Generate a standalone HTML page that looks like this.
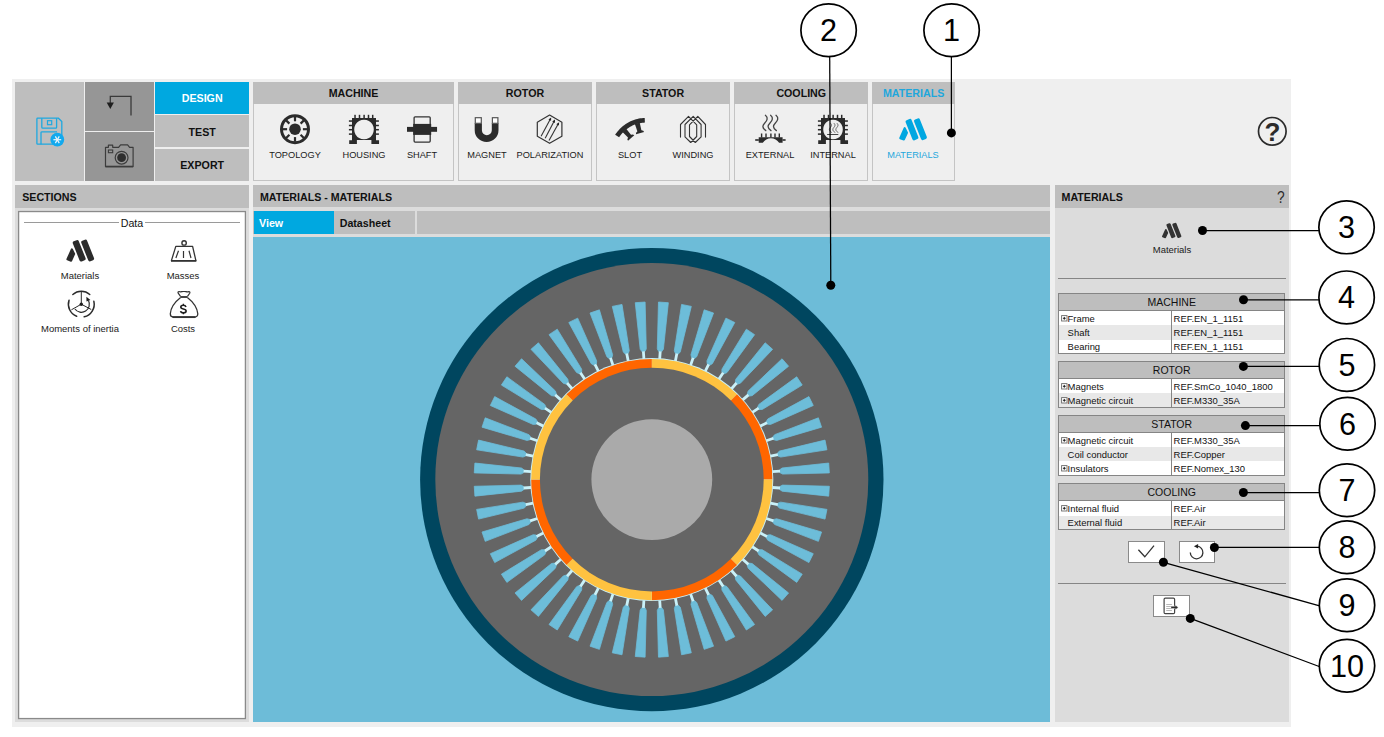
<!DOCTYPE html>
<html>
<head>
<meta charset="utf-8">
<title>Materials</title>
<style>
html,body{margin:0;padding:0;background:#fff;}
body{width:1384px;height:737px;position:relative;overflow:hidden;font-family:"Liberation Sans",sans-serif;color:#111;}
.a{position:absolute;}
.b{position:absolute;white-space:nowrap;line-height:1;}
.hd{background:#bebebe;}
.bold{font-weight:bold;}
.f8{font-size:10.67px;}
.f7{font-size:9.33px;}
.grp .h{position:absolute;left:0;top:0;right:0;height:21.7px;background:#bebebe;text-align:center;font-weight:bold;font-size:10.67px;line-height:23.3px;}
.grp .bd{position:absolute;left:0;top:21.7px;right:0;bottom:0;border:1px solid #c4c4c4;border-top:0;background:#efefef;box-sizing:border-box;}
.lbl{position:absolute;font-size:9.75px;white-space:nowrap;transform:translateX(-50%) scaleX(0.945);line-height:1;color:#1a1a1a;}
.l2{transform:translateX(-50%) scaleX(0.972);}
.tbl{position:absolute;left:1058px;width:227.4px;border:1px solid #858585;box-sizing:border-box;background:#fff;}
.tbl .th{position:absolute;left:0;right:0;top:0;background:#bebebe;border-bottom:1px solid #858585;text-align:center;font-size:10.5px;box-sizing:border-box;}
.tbl .r{position:absolute;left:0;right:0;font-size:9.45px;white-space:nowrap;}
.tbl .r.g{background:#e8e8e8;}
.tbl .r span{position:absolute;top:0;line-height:inherit;}
.tbl .vd{position:absolute;left:112.3px;width:1px;background:#858585;bottom:0;}
.pm{position:absolute;left:1.9px;top:50%;margin-top:-3.0px;}
</style>
</head>
<body>
<!-- app frame -->
<div class="a" style="left:12px;top:79px;width:1278.5px;height:648px;background:#efefef;"></div>

<!-- top-left buttons -->
<div class="a" style="left:15px;top:82px;width:69px;height:99px;background:#bebebe;"></div>
<div class="a" style="left:85px;top:82px;width:69px;height:48.5px;background:#969696;"></div>
<div class="a" style="left:85px;top:132px;width:69px;height:49px;background:#969696;"></div>
<div class="a bold f8" style="left:155.4px;top:82px;width:93.6px;height:32px;background:#00a8e0;color:#fff;text-align:center;line-height:33px;">DESIGN</div>
<div class="a bold f8" style="left:155.4px;top:115px;width:93.6px;height:32px;background:#bebebe;text-align:center;line-height:35px;">TEST</div>
<div class="a bold f8" style="left:155.4px;top:148.8px;width:93.6px;height:31.8px;background:#bebebe;text-align:center;line-height:33.8px;">EXPORT</div>

<!-- ribbon groups -->
<div class="a grp" style="left:253px;top:82px;width:201px;height:98.5px;"><div class="h">MACHINE</div><div class="bd"></div></div>
<div class="a grp" style="left:458px;top:82px;width:134px;height:98.5px;"><div class="h">ROTOR</div><div class="bd"></div></div>
<div class="a grp" style="left:596.2px;top:82px;width:133.8px;height:98.5px;"><div class="h">STATOR</div><div class="bd"></div></div>
<div class="a grp" style="left:734.3px;top:82px;width:133.9px;height:98.5px;"><div class="h">COOLING</div><div class="bd"></div></div>
<div class="a grp" style="left:872.2px;top:82px;width:82.8px;height:98.5px;"><div class="h" style="color:#1ea7dc;">MATERIALS</div><div class="bd"></div></div>

<div class="lbl" style="left:295px;top:150px;">TOPOLOGY</div>
<div class="lbl" style="left:364px;top:150px;">HOUSING</div>
<div class="lbl" style="left:422px;top:150px;">SHAFT</div>
<div class="lbl" style="left:486.5px;top:150px;">MAGNET</div>
<div class="lbl" style="left:549.6px;top:150px;">POLARIZATION</div>
<div class="lbl" style="left:630px;top:150px;">SLOT</div>
<div class="lbl" style="left:693px;top:150px;">WINDING</div>
<div class="lbl" style="left:770.4px;top:150px;">EXTERNAL</div>
<div class="lbl" style="left:832.7px;top:150px;">INTERNAL</div>
<div class="lbl" style="left:913.3px;top:150px;color:#1ea7dc;">MATERIALS</div>

<!-- left panel -->
<div class="a" style="left:15px;top:185.3px;width:234px;height:537.2px;background:#dcdcdc;"></div>
<div class="a hd" style="left:15px;top:185.3px;width:234px;height:22.4px;"></div>
<div class="b bold f8" style="left:22.2px;top:192.3px;">SECTIONS</div>
<div class="a" style="left:18px;top:211px;width:228px;height:508px;background:#fff;"></div>
<div class="a" style="left:24px;top:222px;width:94.5px;height:1px;background:#9a9a9a;"></div>
<div class="a" style="left:145px;top:222px;width:95px;height:1px;background:#9a9a9a;"></div>
<div class="b f8" style="left:120.7px;top:217.9px;">Data</div>
<div class="lbl l2" style="left:80.3px;top:271px;">Materials</div>
<div class="lbl l2" style="left:183.4px;top:271px;">Masses</div>
<div class="lbl l2" style="left:80.3px;top:324.2px;">Moments of inertia</div>
<div class="lbl l2" style="left:183.4px;top:324.2px;">Costs</div>

<!-- center panel -->
<div class="a" style="left:253px;top:185.3px;width:797.3px;height:537.2px;background:#dcdcdc;"></div>
<div class="a hd" style="left:253px;top:185.3px;width:797.3px;height:22px;"></div>
<div class="b bold f8" style="left:259.9px;top:192.3px;">MATERIALS - MATERIALS</div>
<div class="a hd" style="left:253px;top:211.1px;width:797.3px;height:22.6px;"></div>
<div class="a" style="left:253.6px;top:211.1px;width:80.6px;height:22.6px;background:#00a8e0;"></div>
<div class="a" style="left:415.2px;top:211.1px;width:1.8px;height:22.6px;background:#dcdcdc;"></div>
<div class="b bold f8" style="left:259px;top:218.1px;color:#fff;">View</div>
<div class="b bold f8" style="left:339.7px;top:218.1px;">Datasheet</div>
<div class="a" id="canvas" style="left:253px;top:236.8px;width:797.3px;height:485.7px;background:#6dbcd8;"></div>

<!-- right panel -->
<div class="a" style="left:1055px;top:185.3px;width:234px;height:537.2px;background:#dcdcdc;"></div>
<div class="a hd" style="left:1055px;top:185.3px;width:234px;height:22.4px;"></div>
<div class="b bold f8" style="left:1061.5px;top:192.3px;">MATERIALS</div>
<div class="b" style="left:1277px;top:189px;font-size:17.2px;color:#2a2a2a;transform:scaleX(0.8);transform-origin:0 0;">?</div>
<div class="lbl l2" style="left:1171.9px;top:245.1px;">Materials</div>
<div class="a" style="left:1058px;top:278px;width:227.7px;height:1px;background:#858585;"></div>
<div class="a" style="left:1058px;top:583px;width:227.7px;height:1px;background:#858585;"></div>

<!-- TABLES -->
<div class="tbl" style="top:293.0px;height:60.6px;"><div class="th" style="height:16.7px;line-height:16.3px;">MACHINE</div><div class="r" style="top:16.7px;height:14.4px;line-height:16.0px;"><svg class="pm" width="7" height="7" viewBox="0 0 7 7"><rect x="0.6" y="0.6" width="5.4" height="5.4" fill="#fff" stroke="#6a6a6a" stroke-width="0.9"/><path d="M1.9 3.3H4.7M3.3 1.9V4.7" stroke="#111" stroke-width="0.9"/></svg><span style="left:8.6px;">Frame</span><span style="left:114.6px;">REF.EN_1_1151</span></div><div class="r g" style="top:31.1px;height:14.7px;line-height:16.3px;"><span style="left:8.6px;">Shaft</span><span style="left:114.6px;">REF.EN_1_1151</span></div><div class="r" style="top:45.8px;height:12.8px;line-height:14.4px;"><span style="left:8.6px;">Bearing</span><span style="left:114.6px;">REF.EN_1_1151</span></div><div class="vd" style="top:16.7px;"></div></div>
<div class="tbl" style="top:361.3px;height:46.5px;"><div class="th" style="height:16.8px;line-height:16.4px;">ROTOR</div><div class="r" style="top:16.8px;height:14.2px;line-height:15.8px;"><svg class="pm" width="7" height="7" viewBox="0 0 7 7"><rect x="0.6" y="0.6" width="5.4" height="5.4" fill="#fff" stroke="#6a6a6a" stroke-width="0.9"/><path d="M1.9 3.3H4.7M3.3 1.9V4.7" stroke="#111" stroke-width="0.9"/></svg><span style="left:8.6px;">Magnets</span><span style="left:114.6px;">REF.SmCo_1040_1800</span></div><div class="r g" style="top:31.0px;height:13.5px;line-height:15.1px;"><svg class="pm" width="7" height="7" viewBox="0 0 7 7"><rect x="0.6" y="0.6" width="5.4" height="5.4" fill="#fff" stroke="#6a6a6a" stroke-width="0.9"/><path d="M1.9 3.3H4.7M3.3 1.9V4.7" stroke="#111" stroke-width="0.9"/></svg><span style="left:8.6px;">Magnetic circuit</span><span style="left:114.6px;">REF.M330_35A</span></div><div class="vd" style="top:16.8px;"></div></div>
<div class="tbl" style="top:415.2px;height:60.8px;"><div class="th" style="height:16.7px;line-height:16.3px;">STATOR</div><div class="r" style="top:16.7px;height:14.3px;line-height:15.9px;"><svg class="pm" width="7" height="7" viewBox="0 0 7 7"><rect x="0.6" y="0.6" width="5.4" height="5.4" fill="#fff" stroke="#6a6a6a" stroke-width="0.9"/><path d="M1.9 3.3H4.7M3.3 1.9V4.7" stroke="#111" stroke-width="0.9"/></svg><span style="left:8.6px;">Magnetic circuit</span><span style="left:114.6px;">REF.M330_35A</span></div><div class="r g" style="top:31.0px;height:14.3px;line-height:15.9px;"><span style="left:8.6px;">Coil conductor</span><span style="left:114.6px;">REF.Copper</span></div><div class="r" style="top:45.3px;height:13.5px;line-height:15.1px;"><svg class="pm" width="7" height="7" viewBox="0 0 7 7"><rect x="0.6" y="0.6" width="5.4" height="5.4" fill="#fff" stroke="#6a6a6a" stroke-width="0.9"/><path d="M1.9 3.3H4.7M3.3 1.9V4.7" stroke="#111" stroke-width="0.9"/></svg><span style="left:8.6px;">Insulators</span><span style="left:114.6px;">REF.Nomex_130</span></div><div class="vd" style="top:16.7px;"></div></div>
<div class="tbl" style="top:483.4px;height:46.4px;"><div class="th" style="height:16.7px;line-height:16.3px;">COOLING</div><div class="r" style="top:16.7px;height:14.5px;line-height:16.1px;"><svg class="pm" width="7" height="7" viewBox="0 0 7 7"><rect x="0.6" y="0.6" width="5.4" height="5.4" fill="#fff" stroke="#6a6a6a" stroke-width="0.9"/><path d="M1.9 3.3H4.7M3.3 1.9V4.7" stroke="#111" stroke-width="0.9"/></svg><span style="left:8.6px;">Internal fluid</span><span style="left:114.6px;">REF.Air</span></div><div class="r g" style="top:31.2px;height:13.2px;line-height:14.8px;"><span style="left:8.6px;">External fluid</span><span style="left:114.6px;">REF.Air</span></div><div class="vd" style="top:16.7px;"></div></div>

<!-- buttons -->
<div class="a" style="left:1128.2px;top:540.6px;width:36.5px;height:22px;background:#fff;border:1px solid #8a8a8a;box-sizing:border-box;"></div>
<div class="a" style="left:1178.6px;top:540.6px;width:36.2px;height:22px;background:#fff;border:1px solid #8a8a8a;box-sizing:border-box;"></div>
<div class="a" style="left:1153.2px;top:594.5px;width:36.5px;height:22.2px;background:#fff;border:1px solid #8a8a8a;box-sizing:border-box;"></div>

<!-- ICONS -->
<svg class="a" style="left:0;top:0;" width="1384" height="737" viewBox="0 0 1384 737" font-family="Liberation Sans, sans-serif">
<rect x="18.6" y="211.55" width="226.8" height="507" fill="none" stroke="#8a8a8a" stroke-width="1.3"/>
<g transform="translate(30 110)" ><path d="M7.6 8.2H28.4L31.8 11.6V33.5a.7 .7 0 0 1-.7 .7H7.6a.7 .7 0 0 1-.7-.7V8.9a.7 .7 0 0 1 .7-.7Z" fill="none" stroke="#1ea8e0" stroke-width="1.3"/><path d="M11.8 8.2V17.3a.9 .9 0 0 0 .9 .9H25.7a.9 .9 0 0 0 .9-.9V8.2" fill="none" stroke="#1ea8e0" stroke-width="1.3"/><rect x="17.5" y="10.7" width="4.2" height="4" fill="none" stroke="#1ea8e0" stroke-width="1.2"/><path d="M11 34.2V22.7a.9 .9 0 0 1 .9-.9H27" fill="none" stroke="#1ea8e0" stroke-width="1.3"/><circle cx="27.3" cy="29.7" r="6.9" fill="#12a9ee"/><line x1="23.40" y1="29.70" x2="31.20" y2="29.70" stroke="#e8f4fb" stroke-width="1.25"/><line x1="25.35" y1="26.32" x2="29.25" y2="33.08" stroke="#e8f4fb" stroke-width="1.25"/><line x1="29.25" y1="26.32" x2="25.35" y2="33.08" stroke="#e8f4fb" stroke-width="1.25"/></g>
<path d="M131 115.5V96.4H110.3V104" fill="none" stroke="#3a3a3a" stroke-width="1.3"/><path d="M106.7 102.6H113.9L110.3 109Z" fill="#1e1e1e"/>
<path d="M105.5 147.3H108.4V145.2H112.7V147.3H118.6L120.6 144.9H127.6L129.6 147.3H133.1V166.6H105.5Z" fill="none" stroke="#3c3c3c" stroke-width="1.2" stroke-linejoin="round"/><path d="M105.5 166.5H133.1" stroke="#3c3c3c" stroke-width="1.6"/><rect x="108.4" y="150" width="4.3" height="2.7" fill="none" stroke="#3c3c3c" stroke-width="1.1"/><circle cx="121.6" cy="157.7" r="6.4" fill="none" stroke="#3c3c3c" stroke-width="1.2"/><circle cx="121.6" cy="157.7" r="4.4" fill="#2e2e2e"/>
<g transform="translate(295 129.2)" ><circle r="13.5" fill="none" stroke="#2b2b2b" stroke-width="3"/><circle r="5.8" fill="#2b2b2b"/><line x1="0.00" y1="-7.90" x2="0.00" y2="-12.50" stroke="#2b2b2b" stroke-width="2.2"/><line x1="5.59" y1="-5.59" x2="8.84" y2="-8.84" stroke="#2b2b2b" stroke-width="2.2"/><line x1="7.90" y1="-0.00" x2="12.50" y2="-0.00" stroke="#2b2b2b" stroke-width="2.2"/><line x1="5.59" y1="5.59" x2="8.84" y2="8.84" stroke="#2b2b2b" stroke-width="2.2"/><line x1="0.00" y1="7.90" x2="0.00" y2="12.50" stroke="#2b2b2b" stroke-width="2.2"/><line x1="-5.59" y1="5.59" x2="-8.84" y2="8.84" stroke="#2b2b2b" stroke-width="2.2"/><line x1="-7.90" y1="0.00" x2="-12.50" y2="0.00" stroke="#2b2b2b" stroke-width="2.2"/><line x1="-5.59" y1="-5.59" x2="-8.84" y2="-8.84" stroke="#2b2b2b" stroke-width="2.2"/></g>
<g transform="translate(344 108)" ><path fill-rule="evenodd" d="M8 10.05H32V32.3H35.05V35.9H27.4V32H12.9V35.9H5.2V32.3H8Z M20 11.7a9.8 9.8 0 1 0 .01 0Z" fill="#2b2b2b"/><rect x="10.28" y="6.8" width="1.5" height="3.5" fill="#2b2b2b"/><rect x="14.75" y="6.8" width="1.5" height="3.5" fill="#2b2b2b"/><rect x="19.35" y="6.8" width="1.5" height="3.5" fill="#2b2b2b"/><rect x="23.75" y="6.8" width="1.5" height="3.5" fill="#2b2b2b"/><rect x="27.95" y="6.8" width="1.5" height="3.5" fill="#2b2b2b"/><rect x="4.9" y="12.29" width="3.3" height="1.5" fill="#2b2b2b"/><rect x="31.8" y="12.29" width="3.1" height="1.5" fill="#2b2b2b"/><rect x="4.9" y="16.75" width="3.3" height="1.5" fill="#2b2b2b"/><rect x="31.8" y="16.75" width="3.1" height="1.5" fill="#2b2b2b"/><rect x="4.9" y="20.95" width="3.3" height="1.5" fill="#2b2b2b"/><rect x="31.8" y="20.95" width="3.1" height="1.5" fill="#2b2b2b"/><rect x="4.9" y="25.35" width="3.3" height="1.5" fill="#2b2b2b"/><rect x="31.8" y="25.35" width="3.1" height="1.5" fill="#2b2b2b"/></g>
<g transform="translate(402 108)" ><rect x="12.1" y="8.8" width="16.1" height="25.3" rx="1" fill="none" stroke="#333" stroke-width="1.3"/><rect x="11.2" y="15.9" width="18" height="11" fill="#2b2b2b"/><rect x="5" y="18.9" width="30.05" height="4.9" fill="#2b2b2b"/></g>
<g transform="translate(466 108)" ><path d="M8.7 15.2H15.9V22.2a4.95 4.95 0 0 0 9.9 0V15.2H32.5V22.2a11.9 11.9 0 0 1-23.8 0Z" fill="#2b2b2b"/><rect x="9.3" y="9.7" width="6" height="5.6" fill="#fff" stroke="#555" stroke-width="1.2"/><rect x="26.4" y="9.7" width="5.5" height="5.6" fill="#fff" stroke="#555" stroke-width="1.2"/></g>
<g transform="translate(530 108)" ><path d="M19.6 7.1L31.9 14.2V28.3L19.6 35.3L7.3 28.3V14.2Z" fill="none" stroke="#333" stroke-width="1.2" stroke-linejoin="round"/><line x1="11.1" y1="28.3" x2="20.4" y2="10.9" stroke="#333" stroke-width="1.1"/><path d="M21.20 9.40L21.06 12.84L18.42 11.43Z" fill="#222"/><line x1="15.2" y1="30.2" x2="24.2" y2="13" stroke="#333" stroke-width="1.1"/><path d="M24.99 11.49L24.88 14.94L22.22 13.55Z" fill="#222"/><line x1="19" y1="32.6" x2="28.3" y2="15.65" stroke="#333" stroke-width="1.1"/><path d="M29.12 14.16L28.94 17.60L26.31 16.16Z" fill="#222"/></g>
<g transform="translate(610 108)" ><path d="M5.13 26.83L5.95 25.61L6.82 24.41L7.73 23.25L8.69 22.13L9.70 21.05L10.75 20.01L11.84 19.01L12.97 18.06L14.13 17.15L15.34 16.29L16.57 15.48L17.84 14.72L19.14 14.02L20.46 13.36L21.81 12.76L23.18 12.22L24.58 11.73L25.99 11.30L27.42 10.92L28.86 10.60L30.31 10.34L31.78 10.14L33.25 10.00L34.72 9.92L34.89 14.62L33.60 14.69L32.32 14.81L31.04 14.99L29.78 15.21L28.52 15.49L27.27 15.82L26.04 16.19L24.83 16.62L23.63 17.10L22.46 17.62L21.30 18.19L20.17 18.80L19.07 19.47L17.99 20.17L16.94 20.92L15.92 21.71L14.94 22.54L13.99 23.41L13.08 24.32L12.20 25.26L11.36 26.24L10.57 27.25L9.81 28.29L9.10 29.36Z" fill="#2b2b2b"/><path d="M12.46 24.09L16.18 20.75L21.76 27.70L18.79 30.37Z" fill="#2b2b2b"/><path d="M17.90 29.69L21.17 26.75L22.96 26.49L24.27 27.19L18.02 32.81L17.46 31.44Z" fill="#2b2b2b"/><path d="M24.88 15.97L29.69 14.62L31.61 23.33L27.75 24.40Z" fill="#2b2b2b"/><path d="M27.27 23.40L31.50 22.21L33.22 22.77L34.08 23.99L25.98 26.25L26.09 24.76Z" fill="#2b2b2b"/></g>
<g transform="translate(673 108)" ><path d="M7.5 29.1L7.5 16.5L15.5 8.4L23.7 16.9L23.7 28.5L17.7 34.5L12 28.9L12 16.5L20.2 8.4L28.1 16.5L28.1 28.9L22.3 34.5L16.5 28.5L16.5 16.9L24.8 8.4L32.5 16.5L32.5 29.1" fill="none" stroke="#333" stroke-width="1.1" stroke-linejoin="round" stroke-linecap="round"/></g>
<g transform="translate(750 108)" ><path d="M15.4 7.3C18.4 9.8 17.2 12.6 14.8 15S11.8 19.8 15.8 22.6" fill="none" stroke="#444" stroke-width="1.3" stroke-linecap="round"/><path d="M20.6 7.3C23.6 9.8 22.4 12.6 20 15S17 19.8 21 22.6" fill="none" stroke="#444" stroke-width="1.3" stroke-linecap="round"/><path d="M26 7.3C29 9.8 27.8 12.6 25.4 15S22.4 19.8 26.4 22.6" fill="none" stroke="#444" stroke-width="1.3" stroke-linecap="round"/><path d="M8.7 29.3H32.6V34.8H29.1A9.7 9.7 0 0 0 12.8 34.8H8.7Z" fill="#2b2b2b"/><rect x="10.90" y="25.5" width="1.4" height="4" fill="#2b2b2b"/><rect x="15.30" y="25.5" width="1.4" height="4" fill="#2b2b2b"/><rect x="20.20" y="25.5" width="1.4" height="4" fill="#2b2b2b"/><rect x="24.30" y="25.5" width="1.4" height="4" fill="#2b2b2b"/><rect x="28.60" y="25.5" width="1.4" height="4" fill="#2b2b2b"/><rect x="5.2" y="31.2" width="3.6" height="1.6" fill="#2b2b2b"/><rect x="32.5" y="31.2" width="3.1" height="1.6" fill="#2b2b2b"/></g>
<g transform="translate(813 108)" ><path fill-rule="evenodd" d="M8 10.05H32V32.3H35.05V35.9H27.4V32H12.9V35.9H5.2V32.3H8Z M20 11.7a9.8 9.8 0 1 0 .01 0Z" fill="#2b2b2b"/><rect x="10.28" y="6.8" width="1.5" height="3.5" fill="#2b2b2b"/><rect x="14.75" y="6.8" width="1.5" height="3.5" fill="#2b2b2b"/><rect x="19.35" y="6.8" width="1.5" height="3.5" fill="#2b2b2b"/><rect x="23.75" y="6.8" width="1.5" height="3.5" fill="#2b2b2b"/><rect x="27.95" y="6.8" width="1.5" height="3.5" fill="#2b2b2b"/><rect x="4.9" y="12.29" width="3.3" height="1.5" fill="#2b2b2b"/><rect x="31.8" y="12.29" width="3.1" height="1.5" fill="#2b2b2b"/><rect x="4.9" y="16.75" width="3.3" height="1.5" fill="#2b2b2b"/><rect x="31.8" y="16.75" width="3.1" height="1.5" fill="#2b2b2b"/><rect x="4.9" y="20.95" width="3.3" height="1.5" fill="#2b2b2b"/><rect x="31.8" y="20.95" width="3.1" height="1.5" fill="#2b2b2b"/><rect x="4.9" y="25.35" width="3.3" height="1.5" fill="#2b2b2b"/><rect x="31.8" y="25.35" width="3.1" height="1.5" fill="#2b2b2b"/><path d="M17.4 15.2C19.4 17 18.2 18.5 17.1 19.8S15.8 23 18.8 24.5" fill="none" stroke="#555" stroke-width="0.9"/><path d="M20.9 15.2C22.9 17 21.7 18.5 20.6 19.8S19.3 23 22.3 24.5" fill="none" stroke="#555" stroke-width="0.9"/><path d="M23.9 15.2C25.9 17 24.7 18.5 23.6 19.8S22.3 23 25.3 24.5" fill="none" stroke="#555" stroke-width="0.9"/><rect x="14.1" y="26" width="11.2" height="1" fill="#444"/></g>
<g transform="translate(913.1 129.5) scale(1) translate(-20.1 -21.5)"><rect x="-3.2" y="0" width="6.4" height="21.6" rx="1.7" transform="translate(15 11.6) rotate(-21.7)" fill="#00a7e1"/><rect x="-3.1" y="0" width="6.2" height="22.1" rx="1.7" transform="translate(23.4 11.0) rotate(-21.6)" fill="#00a7e1"/><path d="M11.7 20.2L13.9 24.7L10.9 31.4L7.3 30.1Z" fill="#00a7e1" stroke="#00a7e1" stroke-width="2.2" stroke-linejoin="round"/></g>
<g transform="translate(80.3 250.7) scale(1) translate(-20.1 -21.5)"><rect x="-3.2" y="0" width="6.4" height="21.6" rx="1.7" transform="translate(15 11.6) rotate(-21.7)" fill="#2b2b2b"/><rect x="-3.1" y="0" width="6.2" height="22.1" rx="1.7" transform="translate(23.4 11.0) rotate(-21.6)" fill="#2b2b2b"/><path d="M11.7 20.2L13.9 24.7L10.9 31.4L7.3 30.1Z" fill="#2b2b2b" stroke="#2b2b2b" stroke-width="2.2" stroke-linejoin="round"/></g>
<g transform="translate(1171.7 230.6) scale(0.7) translate(-20.1 -21.5)"><rect x="-3.2" y="0" width="6.4" height="21.6" rx="1.7" transform="translate(15 11.6) rotate(-21.7)" fill="#333"/><rect x="-3.1" y="0" width="6.2" height="22.1" rx="1.7" transform="translate(23.4 11.0) rotate(-21.6)" fill="#333"/><path d="M11.7 20.2L13.9 24.7L10.9 31.4L7.3 30.1Z" fill="#333" stroke="#333" stroke-width="2.2" stroke-linejoin="round"/></g>
<g transform="translate(163 232)" ><path d="M12.8 14.4H29.6L32.9 28.6H8.4Z" fill="none" stroke="#333" stroke-width="1.3" stroke-linejoin="round"/><path d="M8 28.9H33.3" stroke="#333" stroke-width="1.7"/><circle cx="21.1" cy="10.9" r="2.2" fill="none" stroke="#333" stroke-width="1.4"/><path d="M15.5 18.75L12.9 26M20.5 19V26.1M26 18.75L28 26" stroke="#333" stroke-width="1.2"/></g>
<g transform="translate(60 284)" ><path d="M12.84 10.46A12.9 12.9 0 0 1 29.76 10.46M33.87 17.30A12.9 12.9 0 0 1 24.20 32.77M16.68 32.24A12.9 12.9 0 0 1 9.03 16.21" fill="none" stroke="#2b2b2b" stroke-width="1.5" stroke-linecap="round"/><path d="M21.3 20.2V7.5M21.3 20.2L11.4 25.8M21.3 20.2L31.25 25.5" stroke="#2b2b2b" stroke-width="1"/><circle cx="21.3" cy="20.2" r="1.7" fill="#1e1e1e"/><path d="M28.46 16.54A8 8 0 0 1 14.93 25.00" fill="none" stroke="#2b2b2b" stroke-width="1.2"/><path d="M26.4 12.8L30.4 16.1L26.5 17.6Z" fill="#1e1e1e"/></g>
<g transform="translate(163 284)" ><path d="M17.6 13.4C13 17 7.6 23.5 7.3 29.8C7.3 31.8 8.6 33 10.2 33H31.9C33.6 33 34.9 31.8 34.8 29.8C34.3 23.5 29 17 24.4 13.4" fill="none" stroke="#333" stroke-width="1.3"/><path d="M9.5 33.2H32.5" stroke="#333" stroke-width="1.7"/><path d="M17.3 13H24.6" stroke="#444" stroke-width="2"/><path d="M17.5 12.4L15.2 9.2C14.6 8 15.3 7.5 16.2 7.6C17.6 8.4 19 7.3 20.9 7.5C22.6 7.3 24.2 8.4 25.8 7.6C26.7 7.5 27.3 8.1 26.7 9.3L24.5 12.4" fill="none" stroke="#333" stroke-width="1.2"/><path d="M23 22.9C22.6 21.7 21.6 21.2 20.3 21.2C18.8 21.2 17.8 21.9 17.8 23C17.8 24.3 19 24.7 20.4 25C21.9 25.3 23.1 25.8 23.1 27.1C23.1 28.3 21.9 28.9 20.4 28.9C18.9 28.9 17.8 28.3 17.6 27.1" fill="none" stroke="#1e1e1e" stroke-width="1.6"/><path d="M20.4 19.7V21.3M20.4 28.8V30.3" stroke="#1e1e1e" stroke-width="1.3"/></g>
<path d="M1138.4 549.7L1144.8 556.8L1154 545.7" fill="none" stroke="#333" stroke-width="1.3"/><path d="M1197.15 546.22A6.3 6.3 0 1 1 1190.30 552.50" fill="none" stroke="#333" stroke-width="1.3"/><path d="M1193.9 546.3L1198.1 543.9V548.6Z" fill="#222"/><rect x="1164.1" y="598.1" width="10.5" height="15.5" rx="1.2" fill="#fff" stroke="#444" stroke-width="1.2"/><rect x="1166.2" y="604.0" width="5.7" height="0.7" fill="#999"/><rect x="1166.2" y="606.1" width="5.7" height="0.7" fill="#999"/><rect x="1166.2" y="608.1" width="5.7" height="0.7" fill="#999"/><rect x="1166.2" y="610.0" width="5.7" height="0.7" fill="#999"/><path d="M1171 606.3H1175.3V605.1L1178.3 607.4L1175.3 609.7V608.5H1171Z" fill="#2b2b2b" stroke="#fff" stroke-width="0.4"/>
<circle cx="1272.3" cy="131.3" r="13.8" fill="none" stroke="#2b2b2b" stroke-width="1.7"/><text x="1272.4" y="140.6" text-anchor="middle" font-size="26" font-weight="bold" fill="#2b2b2b">?</text>
</svg>

<!-- MOTOR -->
<svg class="a" style="left:0;top:0;" width="1384" height="737" viewBox="0 0 1384 737">
<circle cx="651.8" cy="479.6" r="231.7" fill="#00465f"/>
<circle cx="651.8" cy="479.6" r="216.5" fill="#656565"/>
<path d="M658.48 302.06L668.35 302.70L663.40 349.28L661.58 351.77L658.79 351.58L657.31 348.88ZM681.59 304.45L691.30 306.38L680.31 351.91L678.18 354.14L675.44 353.59L674.33 350.72ZM704.20 309.83L713.57 313.02L696.73 356.72L694.33 358.65L691.68 357.75L690.96 354.76ZM725.91 318.13L734.79 322.50L712.39 363.64L709.76 365.24L707.25 364.00L706.92 360.94ZM746.35 329.18L754.59 334.68L727.00 372.54L724.19 373.78L721.86 372.23L721.93 369.15ZM765.18 342.81L772.62 349.34L740.34 383.27L737.38 384.14L735.28 382.29L735.75 379.25ZM782.06 358.78L788.59 366.22L752.15 395.65L749.11 396.12L747.26 394.02L748.13 391.06ZM796.72 376.81L802.22 385.05L762.25 409.47L759.17 409.54L757.62 407.21L758.86 404.40ZM808.90 396.61L813.27 405.49L770.46 424.48L767.40 424.15L766.16 421.64L767.76 419.01ZM818.38 417.83L821.57 427.20L776.64 440.44L773.65 439.72L772.75 437.07L774.68 434.67ZM825.02 440.10L826.95 449.81L780.68 457.07L777.81 455.96L777.26 453.22L779.49 451.09ZM828.70 463.05L829.34 472.92L782.52 474.09L779.82 472.61L779.63 469.82L782.12 468.00ZM829.34 486.28L828.70 496.15L782.12 491.20L779.63 489.38L779.82 486.59L782.52 485.11ZM826.95 509.39L825.02 519.10L779.49 508.11L777.26 505.98L777.81 503.24L780.68 502.13ZM821.57 532.00L818.38 541.37L774.68 524.53L772.75 522.13L773.65 519.48L776.64 518.76ZM813.27 553.71L808.90 562.59L767.76 540.19L766.16 537.56L767.40 535.05L770.46 534.72ZM802.22 574.15L796.72 582.39L758.86 554.80L757.62 551.99L759.17 549.66L762.25 549.73ZM788.59 592.98L782.06 600.42L748.13 568.14L747.26 565.18L749.11 563.08L752.15 563.55ZM772.62 609.86L765.18 616.39L735.75 579.95L735.28 576.91L737.38 575.06L740.34 575.93ZM754.59 624.52L746.35 630.02L721.93 590.05L721.86 586.97L724.19 585.42L727.00 586.66ZM734.79 636.70L725.91 641.07L706.92 598.26L707.25 595.20L709.76 593.96L712.39 595.56ZM713.57 646.18L704.20 649.37L690.96 604.44L691.68 601.45L694.33 600.55L696.73 602.48ZM691.30 652.82L681.59 654.75L674.33 608.48L675.44 605.61L678.18 605.06L680.31 607.29ZM668.35 656.50L658.48 657.14L657.31 610.32L658.79 607.62L661.58 607.43L663.40 609.92ZM645.12 657.14L635.25 656.50L640.20 609.92L642.02 607.43L644.81 607.62L646.29 610.32ZM622.01 654.75L612.30 652.82L623.29 607.29L625.42 605.06L628.16 605.61L629.27 608.48ZM599.40 649.37L590.03 646.18L606.87 602.48L609.27 600.55L611.92 601.45L612.64 604.44ZM577.69 641.07L568.81 636.70L591.21 595.56L593.84 593.96L596.35 595.20L596.68 598.26ZM557.25 630.02L549.01 624.52L576.60 586.66L579.41 585.42L581.74 586.97L581.67 590.05ZM538.42 616.39L530.98 609.86L563.26 575.93L566.22 575.06L568.32 576.91L567.85 579.95ZM521.54 600.42L515.01 592.98L551.45 563.55L554.49 563.08L556.34 565.18L555.47 568.14ZM506.88 582.39L501.38 574.15L541.35 549.73L544.43 549.66L545.98 551.99L544.74 554.80ZM494.70 562.59L490.33 553.71L533.14 534.72L536.20 535.05L537.44 537.56L535.84 540.19ZM485.22 541.37L482.03 532.00L526.96 518.76L529.95 519.48L530.85 522.13L528.92 524.53ZM478.58 519.10L476.65 509.39L522.92 502.13L525.79 503.24L526.34 505.98L524.11 508.11ZM474.90 496.15L474.26 486.28L521.08 485.11L523.78 486.59L523.97 489.38L521.48 491.20ZM474.26 472.92L474.90 463.05L521.48 468.00L523.97 469.82L523.78 472.61L521.08 474.09ZM476.65 449.81L478.58 440.10L524.11 451.09L526.34 453.22L525.79 455.96L522.92 457.07ZM482.03 427.20L485.22 417.83L528.92 434.67L530.85 437.07L529.95 439.72L526.96 440.44ZM490.33 405.49L494.70 396.61L535.84 419.01L537.44 421.64L536.20 424.15L533.14 424.48ZM501.38 385.05L506.88 376.81L544.74 404.40L545.98 407.21L544.43 409.54L541.35 409.47ZM515.01 366.22L521.54 358.78L555.47 391.06L556.34 394.02L554.49 396.12L551.45 395.65ZM530.98 349.34L538.42 342.81L567.85 379.25L568.32 382.29L566.22 384.14L563.26 383.27ZM549.01 334.68L557.25 329.18L581.67 369.15L581.74 372.23L579.41 373.78L576.60 372.54ZM568.81 322.50L577.69 318.13L596.68 360.94L596.35 364.00L593.84 365.24L591.21 363.64ZM590.03 313.02L599.40 309.83L612.64 354.76L611.92 357.75L609.27 358.65L606.87 356.72ZM612.30 306.38L622.01 304.45L629.27 350.72L628.16 353.59L625.42 354.14L623.29 351.91ZM635.25 302.70L645.12 302.06L646.29 348.88L644.81 351.58L642.02 351.77L640.20 349.28Z" fill="#6dbdd9" stroke="#6dbdd9" stroke-width="0.8" stroke-linejoin="round"/>
<path d="M658.81 351.28L661.60 351.47L661.10 359.05L658.31 358.87ZM675.50 353.30L678.24 353.84L676.76 361.30L674.01 360.75ZM691.78 357.47L694.43 358.37L691.99 365.57L689.34 364.67ZM707.38 363.73L709.89 364.97L706.53 371.79L704.02 370.55ZM722.03 371.98L724.35 373.53L720.13 379.85L717.80 378.30ZM735.47 382.07L737.58 383.91L732.57 389.63L730.46 387.78ZM747.49 393.82L749.33 395.93L743.62 400.94L741.77 398.83ZM757.87 407.05L759.42 409.37L753.10 413.60L751.55 411.27ZM766.43 421.51L767.67 424.02L760.85 427.38L759.61 424.87ZM773.03 436.97L773.93 439.62L766.73 442.06L765.83 439.41ZM777.56 453.16L778.10 455.90L770.65 457.39L770.10 454.64ZM779.93 469.80L780.12 472.59L772.53 473.09L772.35 470.30ZM780.12 486.61L779.93 489.40L772.35 488.90L772.53 486.11ZM778.10 503.30L777.56 506.04L770.10 504.56L770.65 501.81ZM773.93 519.58L773.03 522.23L765.83 519.79L766.73 517.14ZM767.67 535.18L766.43 537.69L759.61 534.33L760.85 531.82ZM759.42 549.83L757.87 552.15L751.55 547.93L753.10 545.60ZM749.33 563.27L747.49 565.38L741.77 560.37L743.62 558.26ZM737.58 575.29L735.47 577.13L730.46 571.42L732.57 569.57ZM724.35 585.67L722.03 587.22L717.80 580.90L720.13 579.35ZM709.89 594.23L707.38 595.47L704.02 588.65L706.53 587.41ZM694.43 600.83L691.78 601.73L689.34 594.53L691.99 593.63ZM678.24 605.36L675.50 605.90L674.01 598.45L676.76 597.90ZM661.60 607.73L658.81 607.92L658.31 600.33L661.10 600.15ZM644.79 607.92L642.00 607.73L642.50 600.15L645.29 600.33ZM628.10 605.90L625.36 605.36L626.84 597.90L629.59 598.45ZM611.82 601.73L609.17 600.83L611.61 593.63L614.26 594.53ZM596.22 595.47L593.71 594.23L597.07 587.41L599.58 588.65ZM581.57 587.22L579.25 585.67L583.47 579.35L585.80 580.90ZM568.13 577.13L566.02 575.29L571.03 569.57L573.14 571.42ZM556.11 565.38L554.27 563.27L559.98 558.26L561.83 560.37ZM545.73 552.15L544.18 549.83L550.50 545.60L552.05 547.93ZM537.17 537.69L535.93 535.18L542.75 531.82L543.99 534.33ZM530.57 522.23L529.67 519.58L536.87 517.14L537.77 519.79ZM526.04 506.04L525.50 503.30L532.95 501.81L533.50 504.56ZM523.67 489.40L523.48 486.61L531.07 486.11L531.25 488.90ZM523.48 472.59L523.67 469.80L531.25 470.30L531.07 473.09ZM525.50 455.90L526.04 453.16L533.50 454.64L532.95 457.39ZM529.67 439.62L530.57 436.97L537.77 439.41L536.87 442.06ZM535.93 424.02L537.17 421.51L543.99 424.87L542.75 427.38ZM544.18 409.37L545.73 407.05L552.05 411.27L550.50 413.60ZM554.27 395.93L556.11 393.82L561.83 398.83L559.98 400.94ZM566.02 383.91L568.13 382.07L573.14 387.78L571.03 389.63ZM579.25 373.53L581.57 371.98L585.80 378.30L583.47 379.85ZM593.71 364.97L596.22 363.73L599.58 370.55L597.07 371.79ZM609.17 358.37L611.82 357.47L614.26 364.67L611.61 365.57ZM625.36 353.84L628.10 353.30L629.59 360.75L626.84 361.30ZM642.00 351.47L644.79 351.28L645.29 358.87L642.50 359.05Z" fill="#c9f1f9"/>
<circle cx="651.8" cy="479.6" r="121.5" fill="#c9f1f9"/>
<path d="M651.8 479.6 L651.80 359.00 A120.6 120.6 0 0 1 737.08 394.32 Z" fill="#ffc240"/>
<path d="M651.8 479.6 L737.08 394.32 A120.6 120.6 0 0 1 772.40 479.60 Z" fill="#ff6600"/>
<path d="M651.8 479.6 L772.40 479.60 A120.6 120.6 0 0 1 737.08 564.88 Z" fill="#ffc240"/>
<path d="M651.8 479.6 L737.08 564.88 A120.6 120.6 0 0 1 651.80 600.20 Z" fill="#ff6600"/>
<path d="M651.8 479.6 L651.80 600.20 A120.6 120.6 0 0 1 566.52 564.88 Z" fill="#ffc240"/>
<path d="M651.8 479.6 L566.52 564.88 A120.6 120.6 0 0 1 531.20 479.60 Z" fill="#ff6600"/>
<path d="M651.8 479.6 L531.20 479.60 A120.6 120.6 0 0 1 566.52 394.32 Z" fill="#ffc240"/>
<path d="M651.8 479.6 L566.52 394.32 A120.6 120.6 0 0 1 651.80 359.00 Z" fill="#ff6600"/>
<circle cx="651.8" cy="479.6" r="111.9" fill="#656565"/>
<circle cx="651.8" cy="479.6" r="60.4" fill="#aaaaaa"/>
</svg>

<!-- ANNOTATIONS -->
<svg class="a" style="left:0;top:0;" width="1384" height="737" viewBox="0 0 1384 737" font-family="Liberation Sans, sans-serif">
<line x1="951.4" y1="132.9" x2="951.4" y2="56" stroke="#000" stroke-width="1.25"/>
<circle cx="951.4" cy="132.9" r="4.5" fill="#000"/>
<line x1="830.8" y1="285.3" x2="829.7" y2="56" stroke="#000" stroke-width="1.25"/>
<circle cx="830.8" cy="285.3" r="4.5" fill="#000"/>
<line x1="1202.5" y1="230.55" x2="1320" y2="230.55" stroke="#000" stroke-width="1.25"/>
<circle cx="1202.5" cy="230.55" r="4.5" fill="#000"/>
<line x1="1243.5" y1="299.8" x2="1320" y2="299.8" stroke="#000" stroke-width="1.25"/>
<circle cx="1243.5" cy="299.8" r="4.5" fill="#000"/>
<line x1="1243.4" y1="366.4" x2="1320" y2="366.4" stroke="#000" stroke-width="1.25"/>
<circle cx="1243.4" cy="366.4" r="4.5" fill="#000"/>
<line x1="1245.4" y1="425.6" x2="1320.5" y2="425.6" stroke="#000" stroke-width="1.25"/>
<circle cx="1245.4" cy="425.6" r="4.5" fill="#000"/>
<line x1="1243.4" y1="492.55" x2="1320" y2="492.55" stroke="#000" stroke-width="1.25"/>
<circle cx="1243.4" cy="492.55" r="4.5" fill="#000"/>
<line x1="1214.4" y1="547.45" x2="1320" y2="547.45" stroke="#000" stroke-width="1.25"/>
<circle cx="1214.4" cy="547.45" r="4.5" fill="#000"/>
<line x1="1163.4" y1="562.3" x2="1320.5" y2="606.1" stroke="#000" stroke-width="1.25"/>
<circle cx="1163.4" cy="562.3" r="4.5" fill="#000"/>
<line x1="1190.3" y1="618.4" x2="1320.5" y2="667" stroke="#000" stroke-width="1.25"/>
<circle cx="1190.3" cy="618.4" r="4.5" fill="#000"/>
<ellipse cx="951.6" cy="30.3" rx="27.7" ry="26.4" fill="#fff" stroke="#000" stroke-width="1.7"/>
<text transform="translate(951.6 41.2) scale(1 1)" text-anchor="middle" font-size="30.6" fill="#000">1</text>
<ellipse cx="828.6" cy="30.3" rx="27.7" ry="26.4" fill="#fff" stroke="#000" stroke-width="1.7"/>
<text transform="translate(828.6 41.2) scale(1 1)" text-anchor="middle" font-size="30.6" fill="#000">2</text>
<ellipse cx="1346.55" cy="227.35" rx="27.7" ry="26.4" fill="#fff" stroke="#000" stroke-width="1.7"/>
<text transform="translate(1346.55 238.25) scale(1 1)" text-anchor="middle" font-size="30.6" fill="#000">3</text>
<ellipse cx="1346.6" cy="297.4" rx="27.7" ry="26.4" fill="#fff" stroke="#000" stroke-width="1.7"/>
<text transform="translate(1346.6 308.3) scale(1 1)" text-anchor="middle" font-size="30.6" fill="#000">4</text>
<ellipse cx="1346.9" cy="364.9" rx="27.7" ry="26.4" fill="#fff" stroke="#000" stroke-width="1.7"/>
<text transform="translate(1346.9 375.8) scale(1 1)" text-anchor="middle" font-size="30.6" fill="#000">5</text>
<ellipse cx="1347.5" cy="423.7" rx="27.7" ry="26.4" fill="#fff" stroke="#000" stroke-width="1.7"/>
<text transform="translate(1347.5 434.6) scale(1 1)" text-anchor="middle" font-size="30.6" fill="#000">6</text>
<ellipse cx="1347" cy="490.2" rx="27.7" ry="26.4" fill="#fff" stroke="#000" stroke-width="1.7"/>
<text transform="translate(1347 501.1) scale(1 1)" text-anchor="middle" font-size="30.6" fill="#000">7</text>
<ellipse cx="1347" cy="547.3" rx="27.7" ry="26.4" fill="#fff" stroke="#000" stroke-width="1.7"/>
<text transform="translate(1347 558.2) scale(1 1)" text-anchor="middle" font-size="30.6" fill="#000">8</text>
<ellipse cx="1347" cy="605.3" rx="27.7" ry="26.4" fill="#fff" stroke="#000" stroke-width="1.7"/>
<text transform="translate(1347 616.2) scale(1 1)" text-anchor="middle" font-size="30.6" fill="#000">9</text>
<ellipse cx="1347" cy="665.7" rx="27.7" ry="26.4" fill="#fff" stroke="#000" stroke-width="1.7"/>
<text transform="translate(1347 676.6) scale(1 1)" text-anchor="middle" font-size="30.6" fill="#000">10</text>
</svg>

</body>
</html>
